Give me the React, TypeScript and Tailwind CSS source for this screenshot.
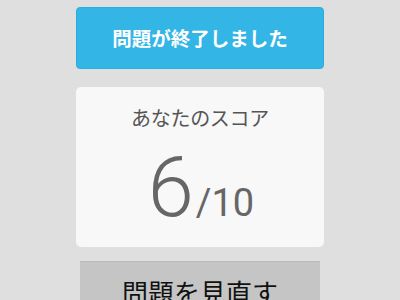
import React from "react";

export default function App() {
  const jp = { fontFamily: '"Noto Sans CJK JP", "Noto Sans", sans-serif' };
  return (
    <div className="w-[400px] h-[300px] overflow-hidden bg-[#dfdfdf] flex flex-col items-center pt-[7px]" style={jp}>
      <div className="shrink-0 w-[248px] h-[62px] rounded-[4px] bg-[#33b5e5] border border-[#2badde] flex items-center justify-center">
        <span className="text-white text-[19.5px] font-bold leading-none">問題が終了しました</span>
      </div>
      <div className="shrink-0 mt-[18px] w-[248px] h-[160px] rounded-[5px] bg-[#f8f8f8] flex flex-col items-center pt-[19px]">
        <div className="text-[#555555] text-[20px] leading-[24px] tracking-[-0.3px]">あなたのスコア</div>
        <div className="mt-[16px] flex items-baseline text-[#666666] pl-[2px]" style={{ fontFamily: 'Roboto, "Liberation Sans", sans-serif' }}>
          <span className="text-[83px] font-light leading-none">6</span>
          <span className="text-[38px] leading-none ml-[2px]">/10</span>
        </div>
      </div>
      <div className="shrink-0 mt-[14px] w-[240px] h-[60px] bg-[#c5c5c5] border-t border-[#bababa] flex items-center justify-center">
        <span className="text-[#111111] text-[26px] leading-none">問題を見直す</span>
      </div>
    </div>
  );
}
